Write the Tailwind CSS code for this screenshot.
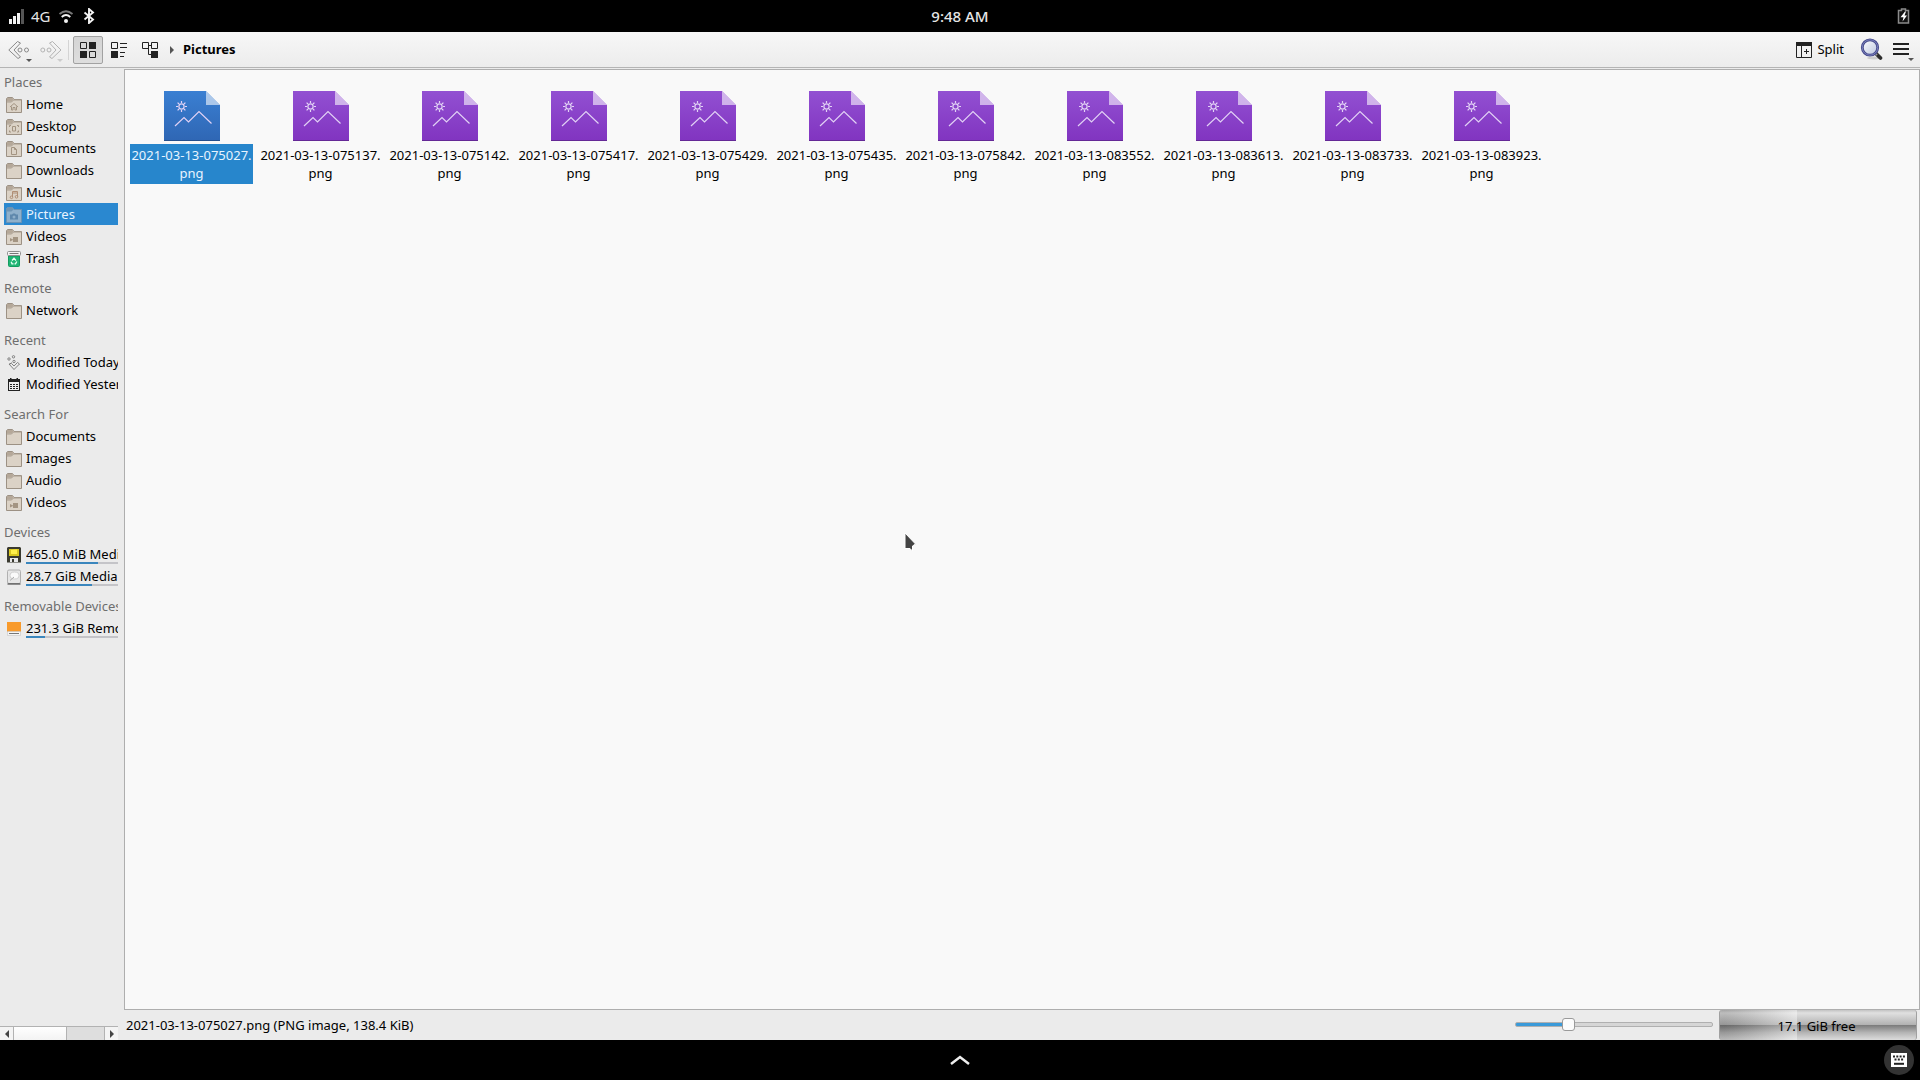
<!DOCTYPE html>
<html lang="en">
<head>
<meta charset="utf-8">
<meta name="viewport" content="width=device-width, initial-scale=1">
<title>Pictures</title>
<script src="https://cdn.jsdelivr.net/npm/@tailwindcss/browser@4"></script>
</head>
<body class="flex h-screen flex-col overflow-hidden bg-black font-['Noto_Sans',sans-serif] text-[13px] text-black">

<svg class="absolute h-0 w-0" aria-hidden="true">
  <defs>
    <linearGradient id="purple" x1="0" y1="0" x2="0" y2="1"><stop offset="0" stop-color="#9250d2"/><stop offset="1" stop-color="#8134c0"/></linearGradient>
    <linearGradient id="blue" x1="0" y1="0" x2="0" y2="1"><stop offset="0" stop-color="#3a7fd2"/><stop offset="1" stop-color="#2f66b4"/></linearGradient>
    <linearGradient id="lens" x1="0" y1="0" x2="1" y2="1"><stop offset="0" stop-color="#ffffff"/><stop offset="1" stop-color="#b9c4de"/></linearGradient>
    <symbol id="folder" viewBox="0 0 16 16"><path d="M.5 15.500V1.500L1.500.5H6.500L8 2.500H15.500V15.500Z" fill="#dbd2c6" stroke="#9c9184"/><path d="M1 1H6.500L7.500 2.500L5.500 4.500H1Z" fill="#b5a899"/><path d="M1 5H5.500L7.500 3H15" fill="none" stroke="#a99d90"/></symbol>
    <symbol id="m-none" viewBox="0 0 16 16"></symbol>
    <symbol id="m-home" viewBox="0 0 16 16"><path d="M4 10L8 6.500L12 10M5.500 9.500V13H7V10.500H9V13H10.500V9.500" fill="none" stroke="#a39482"/></symbol>
    <symbol id="m-desktop" viewBox="0 0 16 16"><path d="M3.500 8V6.500H5M11 6.500H12.500V8M3.500 11.500V13H5M11 13H12.500V11.500M6.500 7.500H9.500V12H6.500Z" fill="none" stroke="#a39482"/></symbol>
    <symbol id="m-doc" viewBox="0 0 16 16"><path d="M5.500 6.500H8.500L10.500 8.500V13.500H5.500ZM8.500 6.500V8.500H10.500" fill="none" stroke="#a39482"/></symbol>
    <symbol id="m-music" viewBox="0 0 16 16"><path d="M6.500 12V6.500H11.500V11.500M6.500 8H11.500" fill="none" stroke="#b08e74"/><circle cx="5.500" cy="12.300" r="1.300" fill="none" stroke="#b08e74"/><circle cx="10.500" cy="11.800" r="1.300" fill="none" stroke="#b08e74"/></symbol>
    <symbol id="m-video" viewBox="0 0 16 16"><path d="M4 9L7 10.500V8H12V13H7V11L4 12.500Z" fill="#a39482"/></symbol>
    <symbol id="picfolder" viewBox="0 0 16 16"><path d="M.5 15.500V1.500L1.500.5H6.500L8 2.500H15.500V15.500Z" fill="#8fb0cb" stroke="#6b93b5"/><path d="M1 1H6.500L7.500 2.500L5.500 4.500H1Z" fill="#6f94b3"/><path d="M4 7.500H6L7 6.500H9L10 7.500H12V12.500H4Z" fill="#5f88ac"/><circle cx="8" cy="10" r="1.500" fill="#8fb0cb"/></symbol>
    <symbol id="trash" viewBox="0 0 16 16"><path d="M2.500 5V14.500Q2.500 15.500 3.500 15.500H12.500Q13.500 15.500 13.500 14.500V5Z" fill="#1fb574" stroke="#139c60"/><rect x="1.500" y=".5" width="13" height="4" rx="1" fill="#f3f3f3" stroke="#8f8f8f"/><path d="M3.500 2.500H12.500" stroke="#777"/><path d="M6 9.500L8 7.300L10 9.500M10.800 10.500L9.500 12.800H8.500M7.500 12.800H6L5.200 10.800" fill="none" stroke="#e6fff3" stroke-width="1.300"/></symbol>
    <symbol id="today" viewBox="0 0 16 16"><g fill="none" stroke="#777" stroke-width=".9"><path d="M3.500 9.500L5.500 7.500M3 9L8 14.500L13.500 9L11.500 7.500L8 11L5.500 8.500Z"/><circle cx="3" cy="4" r="1.200"/><circle cx="7.500" cy="1.800" r="1.200"/><circle cx="8" cy="6.500" r="1.200"/></g></symbol>
    <symbol id="calendar" viewBox="0 0 16 16"><path d="M2 2H14V14H2ZM4 1H5.500V3H4ZM10.500 1H12V3H10.500Z" fill="#222"/><path d="M3 5H13V13H3Z" fill="#ededed"/><path d="M4 7H6V8H4ZM7 7H9V8H7ZM10 7H12V8H10ZM4 9H6V10H4ZM7 9H9V10H7ZM10 9H12V10H10ZM4 11H6V12H4ZM7 11H9V12H7ZM10 11H12V12H10Z" fill="#222"/></symbol>
    <symbol id="card" viewBox="0 0 16 16"><path d="M2 0H14L15 1V15.500H1V1Z" fill="#3a3a30"/><path d="M3 2H13V9H3Z" fill="#d9c820"/><path d="M5 3L11 2.500V7H5Z" fill="#fff04b"/><path d="M4 11H12V15H4Z" fill="#e9e9e9"/><path d="M6 12H8V15H6Z" fill="#3a3a30"/></symbol>
    <symbol id="disk" viewBox="0 0 16 16"><rect x="1.500" y="1" width="13" height="13.500" rx="1.500" fill="#e6e6e6" stroke="#b0b0b0"/><ellipse cx="8.500" cy="6.500" rx="4.500" ry="3.500" fill="#fafafa" stroke="#cfcfcf"/><path d="M4 11.500L8 8" stroke="#aaa"/><path d="M1.500 15H14.500" stroke="#333"/></symbol>
    <symbol id="usb" viewBox="0 0 16 16"><path d="M1 1H15V11H1Z" fill="#f89a2b"/><path d="M1.500 10.500H14.500V14.500H1.500Z" fill="#f4f4f4" stroke="#c4c4c4" stroke-width=".6"/><path d="M3 12.500H13" stroke="#777"/></symbol>
    <symbol id="pic" viewBox="0 0 56 50"><path d="M0 0H42L56 14V50H0Z"/><path d="M42 0L56 14H42Z" fill="#fff" fill-opacity=".58"/><path d="M0 49.500H56" stroke="#000" stroke-opacity=".22"/><g fill="none" stroke="#e2d2f5" stroke-width="1.200"><circle cx="17.500" cy="15.500" r="2.600"/><path d="M17.500 10V12M17.500 19V21M12 15.500H14M21 15.500H23M13.600 11.600L15 13M20 18L21.400 19.400M13.600 19.400L15 18M20 13L21.400 11.600"/><path d="M11 35L20 26.500L24.500 31L35 20.500L47.500 32.500"/></g></symbol>
  </defs>
</svg>

<header class="grid h-8 shrink-0 grid-cols-3 items-center px-2 text-[#e6e6e6]">
  <div class="flex items-center gap-[7px]">
    <svg class="h-4 w-4" viewBox="0 0 16 16"><path d="M1 11H4V16H1ZM5 8H8V16H5ZM9 5H12V16H9Z" fill="#f2f2f2"/><path d="M13 1H16V16H13Z" fill="#555"/></svg>
    <span class="text-[15px] leading-5">4G</span>
    <svg class="h-4 w-4" viewBox="0 0 16 16" fill="none" stroke-width="1.800"><path d="M1.500 6Q8 .5 14.500 6" stroke="#777"/><path d="M3.700 9Q8 5 12.300 9" stroke="#f2f2f2"/><circle cx="8" cy="13" r="2" fill="#f2f2f2"/></svg>
    <svg class="h-4 w-4" viewBox="0 0 16 16" fill="none" stroke="#f2f2f2" stroke-width="1.900"><path d="M3.500 4.500L12 11.500L8 15V1L12 4.500L3.500 11.500"/></svg>
  </div>
  <div class="text-center text-[15px] leading-5 font-medium">9:48 AM</div>
  <div class="flex justify-end"><svg class="h-4 w-4" viewBox="0 0 16 16"><path d="M2.500 2.500H5.500V1H9.500V2.500H12.500V15H2.500Z" fill="#111" stroke="#8b8b8b" stroke-width="1.500"/><path d="M9 3.500L4.500 9.200H7.500L6.500 13.500L11 7.500H8.500L10 3.500Z" fill="#fff"/></svg></div>
</header>

<nav class="flex h-9 shrink-0 items-center border-b border-[#b4b4b4] bg-linear-to-b from-[#f7f7f7] to-[#ececec] pt-px pr-[6px] pl-2">
  <button aria-label="Back" class="h-7 w-8"><svg class="h-6 w-7" viewBox="0 0 28 24" fill="none" stroke="#8a8a8a"><path d="M9.500 3.500L12.500 5L6 12L12.500 19L10 20.500L.8 12Z"/><circle cx="12" cy="12" r="2"/><circle cx="18.500" cy="12" r="2"/><path d="M18 21H24L21 24Z" fill="#555" stroke="none"/></svg></button>
  <button aria-label="Forward" class="h-7 w-7"><svg class="h-6 w-7" viewBox="0 0 28 24" fill="none" stroke="#b3b3b3"><path d="M12.500 3.500L9.500 5L16 12L9.500 19L12 20.500L21 12Z"/><circle cx="2.800" cy="12" r="2"/><circle cx="9" cy="12" r="2"/><path d="M17 21H23L20 24Z" fill="#ccc" stroke="none"/></svg></button>
  <span class="h-5 w-px bg-[#d4d4d4]"></span>
  <button aria-label="Icons view" class="ml-1 flex h-7 w-[30px] items-center justify-center rounded-xs border border-[#a2a2a2] bg-linear-to-b from-[#d4d4d4] to-[#dedede]"><svg class="h-4 w-4" viewBox="0 0 16 16"><path d="M9 0H16V7H9ZM0 9H7V16H0Z" fill="#222"/><path d="M.5.5H6.500V6.500H.5ZM9.500 9.500H15.500V15.500H9.500Z" fill="none" stroke="#222"/></svg></button>
  <button aria-label="Compact view" class="ml-2 h-4 w-4"><svg class="h-4 w-4" viewBox="0 0 16 16"><path d="M0 9H7V16H0Z" fill="#222"/><path d="M.5.5H6.500V6.500H.5ZM9 1.500H16M9 5.500H16M9 10.500H14M9 14.500H13" fill="none" stroke="#222"/></svg></button>
  <button aria-label="Tree view" class="ml-[15px] h-4 w-4"><svg class="h-4 w-4" viewBox="0 0 16 16"><path d="M9 9H16V16H9Z" fill="#222"/><path d="M.5.5H6.500V6.500H.5ZM9.500.5H15.500V6.500H9.500ZM6.500 3.500H9.500M6.500 4V12.500H9" fill="none" stroke="#222"/></svg></button>
  <svg class="ml-3 h-2 w-1" viewBox="0 0 4 8"><path d="M0 0L4 4L0 8Z" fill="#555"/></svg>
  <a href="#" class="ml-[9px] font-bold">Pictures</a>
  <button class="ml-auto flex items-center gap-[5px]"><svg class="h-4 w-4" viewBox="0 0 16 16"><path d="M0 0H16V4H0Z" fill="#222"/><path d="M.5.5H15.500V15.500H.5ZM5.500 4V15.500M8 9.500H13M10.500 7V12" fill="none" stroke="#222"/></svg>Split</button>
  <button aria-label="Search" class="ml-4 h-6 w-6"><svg class="h-6 w-6" viewBox="0 0 24 24"><ellipse cx="14" cy="20" rx="7" ry="1.500" fill="#ccc"/><path d="M16 15.500L20.500 20" stroke="#2d2d2d" stroke-width="3.800" stroke-linecap="round"/><path d="M15 15L17 17" stroke="#999" stroke-width="2"/><circle cx="10" cy="9.500" r="7.700" fill="url(#lens)" stroke="#454a8c" stroke-width="2.800"/><circle cx="10" cy="9.500" r="7.700" fill="none" stroke="#8f95cf" stroke-width=".7"/></svg></button>
  <button aria-label="Menu" class="ml-2 h-6 w-[22px]"><svg class="h-6 w-[22px]" viewBox="0 0 22 24"><path d="M1 6H17M1 11H17M1 16H17" stroke="#222" stroke-width="2"/><path d="M16 20H22L19 23Z" fill="#555"/></svg></button>
</nav>

<div class="flex min-h-0 flex-1 bg-[#ebebeb]">
  <aside class="flex w-[124px] shrink-0 flex-col pt-[3px]">
    <div id="places" class="flex w-[118px] min-h-0 flex-1 flex-col gap-2 overflow-hidden pl-1 whitespace-nowrap"></div>
    <div class="flex h-[14px] w-[118px] shrink-0 items-stretch border-t border-[#b2b2b2] bg-[#f4f4f4]">
      <button aria-label="Scroll left" class="flex w-[14px] items-center justify-center border-r border-[#b2b2b2]"><svg class="h-2 w-1" viewBox="0 0 4 8"><path d="M4 0L0 4L4 8Z" fill="#444"/></svg></button>
      <span class="w-[53px] border-r border-[#b2b2b2] bg-linear-to-b from-white to-[#f3f3f3]"></span>
      <span class="flex-1 bg-[#dedede]"></span>
      <button aria-label="Scroll right" class="flex w-[14px] items-center justify-center border-l border-[#b2b2b2]"><svg class="h-2 w-1" viewBox="0 0 4 8"><path d="M0 0L4 4L0 8Z" fill="#444"/></svg></button>
    </div>
  </aside>

  <div class="flex min-w-0 flex-1 flex-col pt-px">
    <main id="files" class="flex min-h-0 flex-1 flex-wrap content-start gap-x-[6px] border border-[#aeaeae] bg-[#f9f9f9] pt-[21px] pl-[5px]"></main>
    <footer class="flex h-[30px] shrink-0 items-center pr-[3px] pl-[2px]">
      <span class="pt-px">2021-03-13-075027.png (PNG image, 138.4 KiB)</span>
      <input type="range" aria-label="Zoom" min="0" max="100" value="25" class="mr-[6px] mb-px ml-auto h-[5px] w-[198px] appearance-none rounded-xs border border-[#b0b0b0] bg-linear-to-r from-[#3a9ad9] from-25% to-[#d6d6d6] to-25% [&::-webkit-slider-thumb]:h-[13px] [&::-webkit-slider-thumb]:w-[13px] [&::-webkit-slider-thumb]:appearance-none [&::-webkit-slider-thumb]:rounded-[3px] [&::-webkit-slider-thumb]:border [&::-webkit-slider-thumb]:border-[#9a9a9a] [&::-webkit-slider-thumb]:bg-[#fcfcfc]">
      <div class="relative flex h-[30px] w-[198px] items-center justify-center overflow-hidden rounded-[3px] border-x border-[#a0a0a0] bg-[linear-gradient(#c4c4c4_0%,#e0e0e0_10%,#b2b2b2_49%,#7c7c7c_51%,#b4b4b4_75%,#dcdcdc_100%)]">
        <span class="absolute inset-y-0 left-0 w-[77px] bg-linear-to-r from-black/15 to-white/40"></span>
        <span class="relative pt-[3px] pr-[3px]">17.1 GiB free</span>
      </div>
    </footer>
  </div>
</div>

<footer class="grid h-10 shrink-0 grid-cols-3 items-center bg-black">
  <span></span>
  <button aria-label="Show apps" class="justify-self-center"><svg class="h-3 w-6" viewBox="0 0 24 12"><path d="M3 10L12 3L21 10" fill="none" stroke="#eee" stroke-width="2.500"/></svg></button>
  <button aria-label="Keyboard" class="mr-[6px] flex h-[30px] w-[30px] items-center justify-center justify-self-end rounded-full bg-[#333]"><svg class="h-[14px] w-4" viewBox="0 0 16 14"><path d="M0 0H16V14H0Z" fill="#fff"/><path d="M2 3.500H14M3.500 6.500H13" stroke="#222" stroke-width="2" stroke-dasharray="2 1.300"/><path d="M3 10.800H13" stroke="#222" stroke-width="2"/></svg></button>
</footer>

<svg aria-hidden="true" class="pointer-events-none absolute top-1/2 left-[47%] mt-[-8px] ml-px h-6 w-[15px]" viewBox="0 0 15 24"><path d="M2 1L12.500 12L9.500 14V19L7 16.500H2Z" fill="#444" stroke="#fff"/></svg>

<script>
const groups = [
  ["Places", [["Home","m-home"],["Desktop","m-desktop"],["Documents","m-doc"],["Downloads","m-none"],["Music","m-music"],["Pictures","picfolder"],["Videos","m-video"],["Trash","trash"]]],
  ["Remote", [["Network","m-none"]]],
  ["Recent", [["Modified Today","today"],["Modified Yesterday","calendar"]]],
  ["Search For", [["Documents","m-none"],["Images","m-none"],["Audio","m-none"],["Videos","m-video"]]],
  ["Devices", [["465.0 MiB Media","card",78],["28.7 GiB Media","disk",72]]],
  ["Removable Devices", [["231.3 GiB Removable","usb",21]]]
];
document.getElementById("places").innerHTML = groups.map(([title, items]) => `
  <section>
    <h2 class="h-[22px] leading-[22px] text-[#6e6e6e]">${title}</h2>
    ${items.map(([name, icon, used]) => `
    <a href="#" class="flex h-[22px] items-center gap-1 pt-px pl-[2px] ${name === "Pictures" ? "bg-[#2a88d0] text-[#e8f4ff]" : ""}">
      <svg class="h-4 w-4 shrink-0">${icon.startsWith("m-") ? '<use href="#folder"/>' : ""}<use href="#${icon}"/></svg>
      <span class="relative flex h-[22px] min-w-0 flex-1 items-center overflow-hidden pt-px">${name}${used ? `<span class="absolute inset-x-0 bottom-[2px] h-[2px] bg-[#c4c4c8]"><span class="block h-[2px] bg-[#3a86bd]" style="width:${used}%"></span></span>` : ""}</span>
    </a>`).join("")}
  </section>`).join("");
const shots = ["075027","075137","075142","075417","075429","075435","075842","083552","083613","083733","083923"];
document.getElementById("files").innerHTML = shots.map((s, i) => `
  <a href="#" class="flex w-[123px] flex-col items-center gap-[3px]">
    <svg class="h-[50px] w-[56px]" fill="${i ? "url(#purple)" : "url(#blue)"}"><use href="#pic"/></svg>
    <span class="w-full pt-[2px] pb-[2px] text-center leading-[18px] ${i ? "" : "bg-[#2786cc] text-[#e8f4ff]"}">2021-03-13-${s}.<br>png</span>
  </a>`).join("");
</script>
</body>
</html>
